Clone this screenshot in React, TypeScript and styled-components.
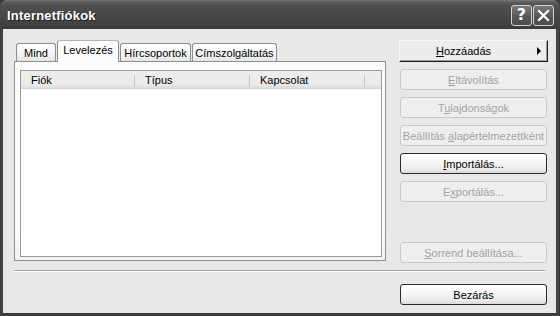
import React from 'react';
import styled, { createGlobalStyle } from 'styled-components';

const Global = createGlobalStyle`
  html, body { margin: 0; padding: 0; background: #3a3a3a; }
  body { font-family: "Liberation Sans", Arial, sans-serif; font-size: 11px; color: #000; }
  #root { width: 560px; height: 316px; }
`;

const Window = styled.div`
  width: 560px;
  height: 316px;
  box-sizing: border-box;
  display: flex;
  flex-direction: column;
  background: linear-gradient(90deg, #2e2e2e 0, #4a4a4a 1px, #3c3c3c 3px, #3c3c3c 556px, #4a4a4a 558px, #2e2e2e 560px);
  border-radius: 7px 7px 0 0;
  overflow: hidden;
`;

const TitleBar = styled.div`
  height: 29px;
  flex: none;
  display: flex;
  align-items: center;
  padding: 0 6px 0 7px;
  box-sizing: border-box;
  background: linear-gradient(#7a7a7a 0, #5c5c5c 2px, #4e4e4e 6px, #474747 16px, #424242 24px, #3a3a3a 29px);
`;

const Title = styled.div`
  flex: 1;
  color: #fff;
  font-weight: bold;
  font-size: 13px;
  letter-spacing: 0.2px;
  font-family: "Liberation Sans", Arial, sans-serif;
  text-shadow: 1px 1px 0 #1e1e1e;
  padding-top: 1px;
`;

const CaptionButtons = styled.div`
  display: flex;
  gap: 1px;
  padding-top: 1px;
`;

const CaptionButton = styled.div`
  width: 21px;
  height: 21px;
  box-sizing: border-box;
  border: 1px solid #d4d4d4;
  border-radius: 3px;
  background: linear-gradient(#787878, #555 60%, #4c4c4c);
  display: flex;
  align-items: center;
  justify-content: center;
  color: #fff;
  font-weight: bold;
  font-size: 16px;
  font-family: "DejaVu Sans", sans-serif;
  line-height: 1;
`;

const Body = styled.div`
  flex: 1;
  margin: 0 4px 3px 3px;
  background: #e8e8e8;
  padding: 11px 9px 0 11px;
  display: flex;
  flex-direction: column;
`;

const MainRow = styled.div`
  display: flex;
  align-items: flex-start;
  gap: 14px;
`;

const LeftCol = styled.div`
  width: 372px;
  height: 221px;
  display: flex;
  flex-direction: column;
`;

const TabStrip = styled.div`
  height: 21px;
  display: flex;
  align-items: flex-end;
  padding-left: 2px;
  position: relative;
  z-index: 1;
`;

const Tab = styled.div<{ $w: number; $active?: boolean }>`
  width: ${p => p.$w}px;
  height: ${p => (p.$active ? 22 : 18)}px;
  margin-bottom: ${p => (p.$active ? -1 : 0)}px;
  margin-right: 1px;
  box-sizing: border-box;
  border: 1px solid #8e8e8e;
  border-bottom: none;
  border-top-color: ${p => (p.$active ? '#b4b4b4' : '#8e8e8e')};
  border-radius: 3px 3px 0 0;
  background: ${p => (p.$active ? '#fcfcfc' : 'linear-gradient(#ffffff, #f3f3f3 60%, #e6e6e6)')};
  display: flex;
  align-items: center;
  justify-content: center;
  padding-bottom: ${p => (p.$active ? 3 : 0)}px;
  white-space: nowrap;
`;

const Panel = styled.div`
  flex: 1;
  border: 1px solid #8e8e8e;
  background: linear-gradient(#fcfcfc 85%, #f2f2f2);
  padding: 8px 3px 3px 5px;
  display: flex;
  min-height: 0;
`;

const ListView = styled.div`
  flex: 1;
  border: 1px solid #9a9a9a;
  background: #fff;
  display: flex;
  flex-direction: column;
`;

const Header = styled.div`
  height: 18px;
  display: flex;
  background: linear-gradient(#ededed, #ebebeb 80%, #dcdcdc);
  border-bottom: 1px solid #d2d2d2;
  box-sizing: border-box;
`;

const HeaderCell = styled.div<{ $w: number }>`
  width: ${p => p.$w}px;
  box-sizing: border-box;
  padding-left: 10px;
  display: flex;
  align-items: center;
  position: relative;
  &::after {
    content: "";
    position: absolute;
    right: 0;
    top: 4px;
    bottom: 1px;
    width: 1px;
    background: #c6c6c6;
  }
`;

const RightCol = styled.div`
  width: 147px;
  height: 223px;
  padding-top: 1px;
  box-sizing: border-box;
  display: flex;
  flex-direction: column;
  gap: 7px;
`;

type Variant = 'menu' | 'normal' | 'disabled';

const Button = styled.div<{ $v: Variant; $push?: boolean }>`
  height: 21px;
  width: 147px;
  box-sizing: border-box;
  flex: none;
  display: flex;
  align-items: center;
  justify-content: center;
  position: relative;
  white-space: nowrap;
  margin-top: ${p => (p.$push ? 'auto' : '0')};
  ${p =>
    p.$v === 'menu'
      ? `
    border: 1px solid;
    border-color: #f8f8f8 #1a1a1a #1a1a1a #f8f8f8;
    box-shadow: inset -1px -1px 0 #a0a0a0;
    background: #ececec;
    padding-right: 20px;
    margin-top: -1px;
    height: 22px;
    width: 149px;
    margin-left: -1px;
  `
      : p.$v === 'normal'
      ? `
    border: 1px solid #2a2a2a;
    border-radius: 3px;
    background: linear-gradient(#ffffff, #f4f4f4 50%, #e8e8e8 85%, #d8d8d8);
  `
      : `
    border: 1px solid #c9c9c9;
    border-radius: 3px;
    background: #eeeeee;
    color: #a3a3a3;
  `}
`;

const Arrow = styled.span`
  position: absolute;
  right: 6px;
  top: 6px;
  width: 0;
  height: 0;
  border-top: 4px solid transparent;
  border-bottom: 4px solid transparent;
  border-left: 4px solid #000;
`;

const Separator = styled.div`
  margin-top: 7px;
  margin-right: 2px;
  height: 1px;
  background: #a0a0a0;
  border-bottom: 1px solid #fff;
`;

const BottomRow = styled.div`
  margin-top: 12px;
  display: flex;
  justify-content: flex-end;
`;

const U = styled.span`
  text-decoration: underline;
  text-underline-offset: 1px;
`;

const tabs = [
  { label: 'Mind', w: 40 },
  { label: 'Levelezés', w: 62, active: true },
  { label: 'Hírcsoportok', w: 71 },
  { label: 'Címszolgáltatás', w: 85 },
];

export default function App() {
  return (
    <>
      <Global />
      <Window>
        <TitleBar>
          <Title>Internetfiókok</Title>
          <CaptionButtons>
            <CaptionButton>?</CaptionButton>
            <CaptionButton>
              <svg width="13" height="13" viewBox="0 0 13 13">
                <path d="M2 2 L11 11 M11 2 L2 11" stroke="#fff" strokeWidth="2.2" strokeLinecap="square" />
              </svg>
            </CaptionButton>
          </CaptionButtons>
        </TitleBar>
        <Body>
          <MainRow>
            <LeftCol>
              <TabStrip>
                {tabs.map(t => (
                  <Tab key={t.label} $w={t.w} $active={t.active}>
                    {t.label}
                  </Tab>
                ))}
              </TabStrip>
              <Panel>
                <ListView>
                  <Header>
                    <HeaderCell $w={114}>Fiók</HeaderCell>
                    <HeaderCell $w={115}>Típus</HeaderCell>
                    <HeaderCell $w={115}>Kapcsolat</HeaderCell>
                  </Header>
                </ListView>
              </Panel>
            </LeftCol>
            <RightCol>
              <Button $v="menu">
                <span><U>H</U>ozzáadás</span>
                <Arrow />
              </Button>
              <Button $v="disabled"><span><U>E</U>ltávolítás</span></Button>
              <Button $v="disabled"><span>T<U>u</U>lajdonságok</span></Button>
              <Button $v="disabled"><span>Beállítás <U>a</U>lapértelmezettként</span></Button>
              <Button $v="normal"><span><U>I</U>mportálás...</span></Button>
              <Button $v="disabled"><span>E<U>x</U>portálás...</span></Button>
              <Button $v="disabled" $push><span><U>S</U>orrend beállítása...</span></Button>
            </RightCol>
          </MainRow>
          <Separator />
          <BottomRow>
            <Button $v="normal">Bezárás</Button>
          </BottomRow>
        </Body>
      </Window>
    </>
  );
}
